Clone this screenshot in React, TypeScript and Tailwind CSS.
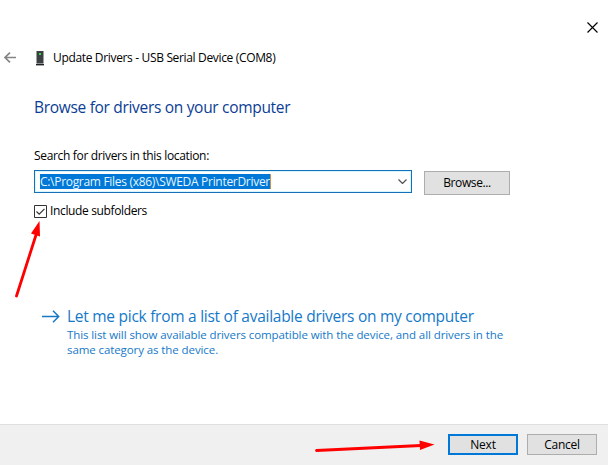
export default function App() {
  return (
    <div className="relative flex h-[466px] w-[609px] flex-col overflow-hidden bg-white pr-px pb-px font-['Open_Sans','Noto_Sans',sans-serif] text-xs leading-4 text-black">
      <div className="flex h-[48px] justify-end pt-[22px] pr-[10px]">
        <svg className="h-[11px] w-[11px]" viewBox="0 0 11 11" stroke="#000" strokeWidth="1.15">
          <path d="M.5.5l10 10M10.5.5l-10 10" />
        </svg>
      </div>
      <header className="flex h-5 items-center pl-1">
        <svg className="h-3 w-3" viewBox="0 0 12 12" fill="none" stroke="#858585" strokeWidth="1.7">
          <path d="M12 5.5H1M6 .7L1 5.5l5 4.8" />
        </svg>
        <svg className="ml-5 h-[15px] w-2" viewBox="0 0 8 15">
          <path fill="#3c4043" d="M.5 0h7v12.5h-7z" />
          <path fill="#899090" d="M.8 12.3h6.4v.8H.8z" />
          <path fill="#202426" d="M0 13h8v1.4H0z" />
          <path fill="#35d64b" d="M3 2h2v2H3z" />
        </svg>
        <h1 className="ml-[9px] whitespace-nowrap tracking-[-0.34px]">Update Drivers - USB Serial Device (COM8)</h1>
      </header>
      <main className="flex flex-1 flex-col pl-[34px]">
        <h2 className="mt-[27px] h-6 whitespace-nowrap text-[15.5px] leading-6 tracking-[-0.31px] text-[#0b3d94]">
          Browse for drivers on your computer
        </h2>
        <label className="mt-[29px] h-4 self-start whitespace-nowrap tracking-[-0.33px]">Search for drivers in this location:</label>
        <div className="mt-[6px] flex h-[25px]">
          <div className="flex h-[23px] w-[378px] items-center border border-[#1670b8] pl-[5px] shadow-[inset_0_0_0_1px_#d5f6ff]">
            <span className="flex h-[15px] w-[231px] items-center whitespace-nowrap border-r border-[#d78b43] bg-[#0078d7] tracking-[-0.3px] text-[#e5f5ff]">
              C:\Program Files (x86)\SWEDA PrinterDriver
            </span>
            <svg className="ml-auto mr-1 h-[5px] w-[9px]" viewBox="0 0 9 5" fill="none" stroke="#505050" strokeWidth="1.2">
              <path d="M.5.5l4 4 4-4" />
            </svg>
          </div>
          <button className="mt-px ml-3 h-6 w-[86px] border border-[#adadad] bg-[#e1e1e1] tracking-[-0.4px]">Browse...</button>
        </div>
        <label className="mt-[8px] flex h-4 items-center tracking-[-0.36px]">
          <svg className="h-[13px] w-[13px]" viewBox="0 0 13 13" fill="none" stroke="#333">
            <path d="M.5.5h12v12H.5z" />
            <path strokeWidth="1.2" d="M2.5 6.5l2.7 2.7 5.3-5.4" />
          </svg>
          <span className="ml-[3px] whitespace-nowrap">Include subfolders</span>
        </label>
        <section className="mt-[86px] flex pl-2 text-[#1579c8]">
          <svg className="mt-1 h-[15px] w-[18px]" viewBox="0 0 18 15" fill="none" stroke="currentColor" strokeWidth="1.5">
            <path d="M0 7.5h17M11 1.800l5.700 5.700-5.700 5.700" />
          </svg>
          <div className="ml-[7px] whitespace-nowrap">
            <h3 className="h-[22px] text-[15.5px] leading-[22px] tracking-[-0.27px]">Let me pick from a list of available drivers on my computer</h3>
            <p className="text-[11.5px] leading-[15px] tracking-[-0.09px]">
              This list will show available drivers compatible with the device, and all drivers in the
              <br />
              same category as the device.
            </p>
          </div>
        </section>
      </main>
      <footer className="flex h-[41px] justify-end gap-[9px] border-t border-[#dfdfdf] bg-[#f0f0f0] pt-[9px] pr-[11px] tracking-[-0.25px]">
        <button className="h-[21px] w-[70px] border-2 border-[#0078d7] bg-[#e1e1e1] leading-[17px]">Next</button>
        <button className="h-[21px] w-[70px] border border-[#adadad] bg-[#e1e1e1] leading-[19px]">Cancel</button>
      </footer>
      <svg className="pointer-events-none absolute inset-0 h-[466px] w-[609px]" viewBox="0 0 609 466" fill="#f00" stroke="#f00">
        <path d="M16.5 296L36 235" strokeWidth="2.8" strokeLinecap="round" />
        <path stroke="none" d="M39.5 221L40 236.500 31 233.500z" />
        <path d="M316.500 450.500L421 445.500" strokeWidth="2.8" strokeLinecap="round" />
        <path stroke="none" d="M434.500 444.500L419.500 440.500 420 450z" />
      </svg>
    </div>
  );
}
